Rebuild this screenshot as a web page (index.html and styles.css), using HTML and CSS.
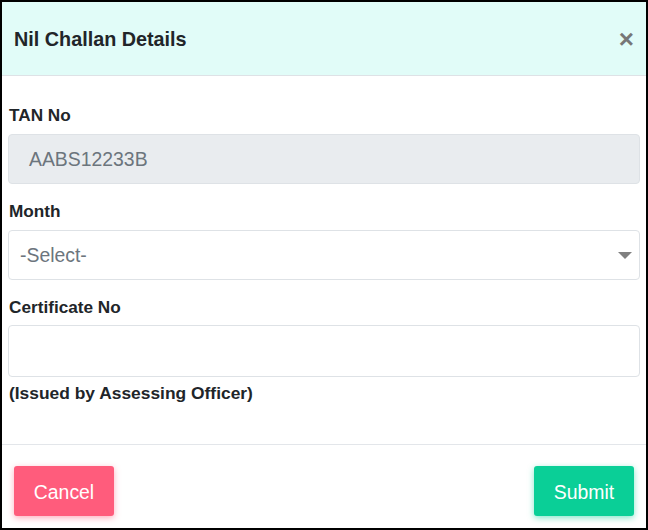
FILE: index.html
```html
<!DOCTYPE html>
<html>
<head>
<meta charset="utf-8">
<link rel="stylesheet" href="styles.css">
</head>
<body>
<div class="modal">
  <div class="modal-header">
    <h4 class="modal-title">Nil Challan Details</h4>
    <span class="close">&times;</span>
  </div>
  <div class="modal-body">
    <div class="group">
      <div class="label">TAN No</div>
      <div class="control disabled">AABS12233B</div>
    </div>
    <div class="group">
      <div class="label">Month</div>
      <div class="control select"><span>-Select-</span><span class="caret"></span></div>
    </div>
    <div class="group last">
      <div class="label">Certificate No</div>
      <div class="control tall"></div>
      <div class="hint">(Issued by Assessing Officer)</div>
    </div>
  </div>
  <div class="modal-footer">
    <button class="btn cancel">Cancel</button>
    <button class="btn submit">Submit</button>
  </div>
</div>
</body>
</html>
```
FILE: styles.css
```css
* { box-sizing: border-box; }
html, body { margin: 0; padding: 0; }
body {
  font-family: "Liberation Sans", Arial, sans-serif;
  background: #fff;
  color: #212529;
}
.modal {
  width: 648px;
  height: 530px;
  border: 2px solid #000;
  display: flex;
  flex-direction: column;
}
.modal-header {
  height: 74px;
  background: #e1fcf8;
  border-bottom: 1px solid #dee2e6;
  display: flex;
  align-items: center;
  justify-content: space-between;
  padding: 2px 12px 0 12px;
}
.modal-title {
  margin: 0;
  font-size: 19.8px;
  font-weight: bold;
  color: #212529;
}
.close {
  font-size: 26px;
  font-weight: bold;
  color: #777;
  line-height: 1;
  margin-top: -2px;
}
.modal-body {
  flex: 1;
  padding: 29px 6px 0 6px;
  border-bottom: 1px solid #e3e6ea;
}
.group { margin-bottom: 17px; }
.label {
  font-size: 17.2px;
  font-weight: bold;
  line-height: 20px;
  padding-left: 1px;
  margin-bottom: 9px;
}
.control {
  height: 50px;
  border: 1px solid #dee2e6;
  border-radius: 4px;
  background: #fff;
  font-size: 19.4px;
  color: #6c757d;
  display: flex;
  align-items: center;
  padding: 0 20px;
}
.control.tall { height: 52px; margin-top: -1px; }
.control.disabled { background: #e9ecef; }
.control.select {
  justify-content: space-between;
  padding: 0 8px 0 11px;
}
.caret {
  width: 0;
  height: 0;
  border-left: 7px solid transparent;
  border-right: 7px solid transparent;
  border-top: 7px solid #808080;
  margin-right: -1px;
}
.hint {
  font-size: 17.4px;
  font-weight: bold;
  line-height: 20px;
  margin-top: 6px;
  padding-left: 1px;
}
.modal-footer {
  height: 83px;
  display: flex;
  justify-content: space-between;
  align-items: flex-start;
  padding: 21px 12px 0 12px;
}
.btn {
  width: 100px;
  height: 50px;
  border: none;
  border-radius: 3px;
  color: #fff;
  font-family: "Liberation Sans", Arial, sans-serif;
  font-size: 19.4px;
  padding: 2px 0 0 0;
}
.cancel {
  background: #ff5c7c;
  box-shadow: 0 2px 6px rgba(255, 92, 124, 0.5);
}
.submit {
  background: #0acf97;
  box-shadow: 0 2px 6px rgba(10, 207, 151, 0.5);
}
```
